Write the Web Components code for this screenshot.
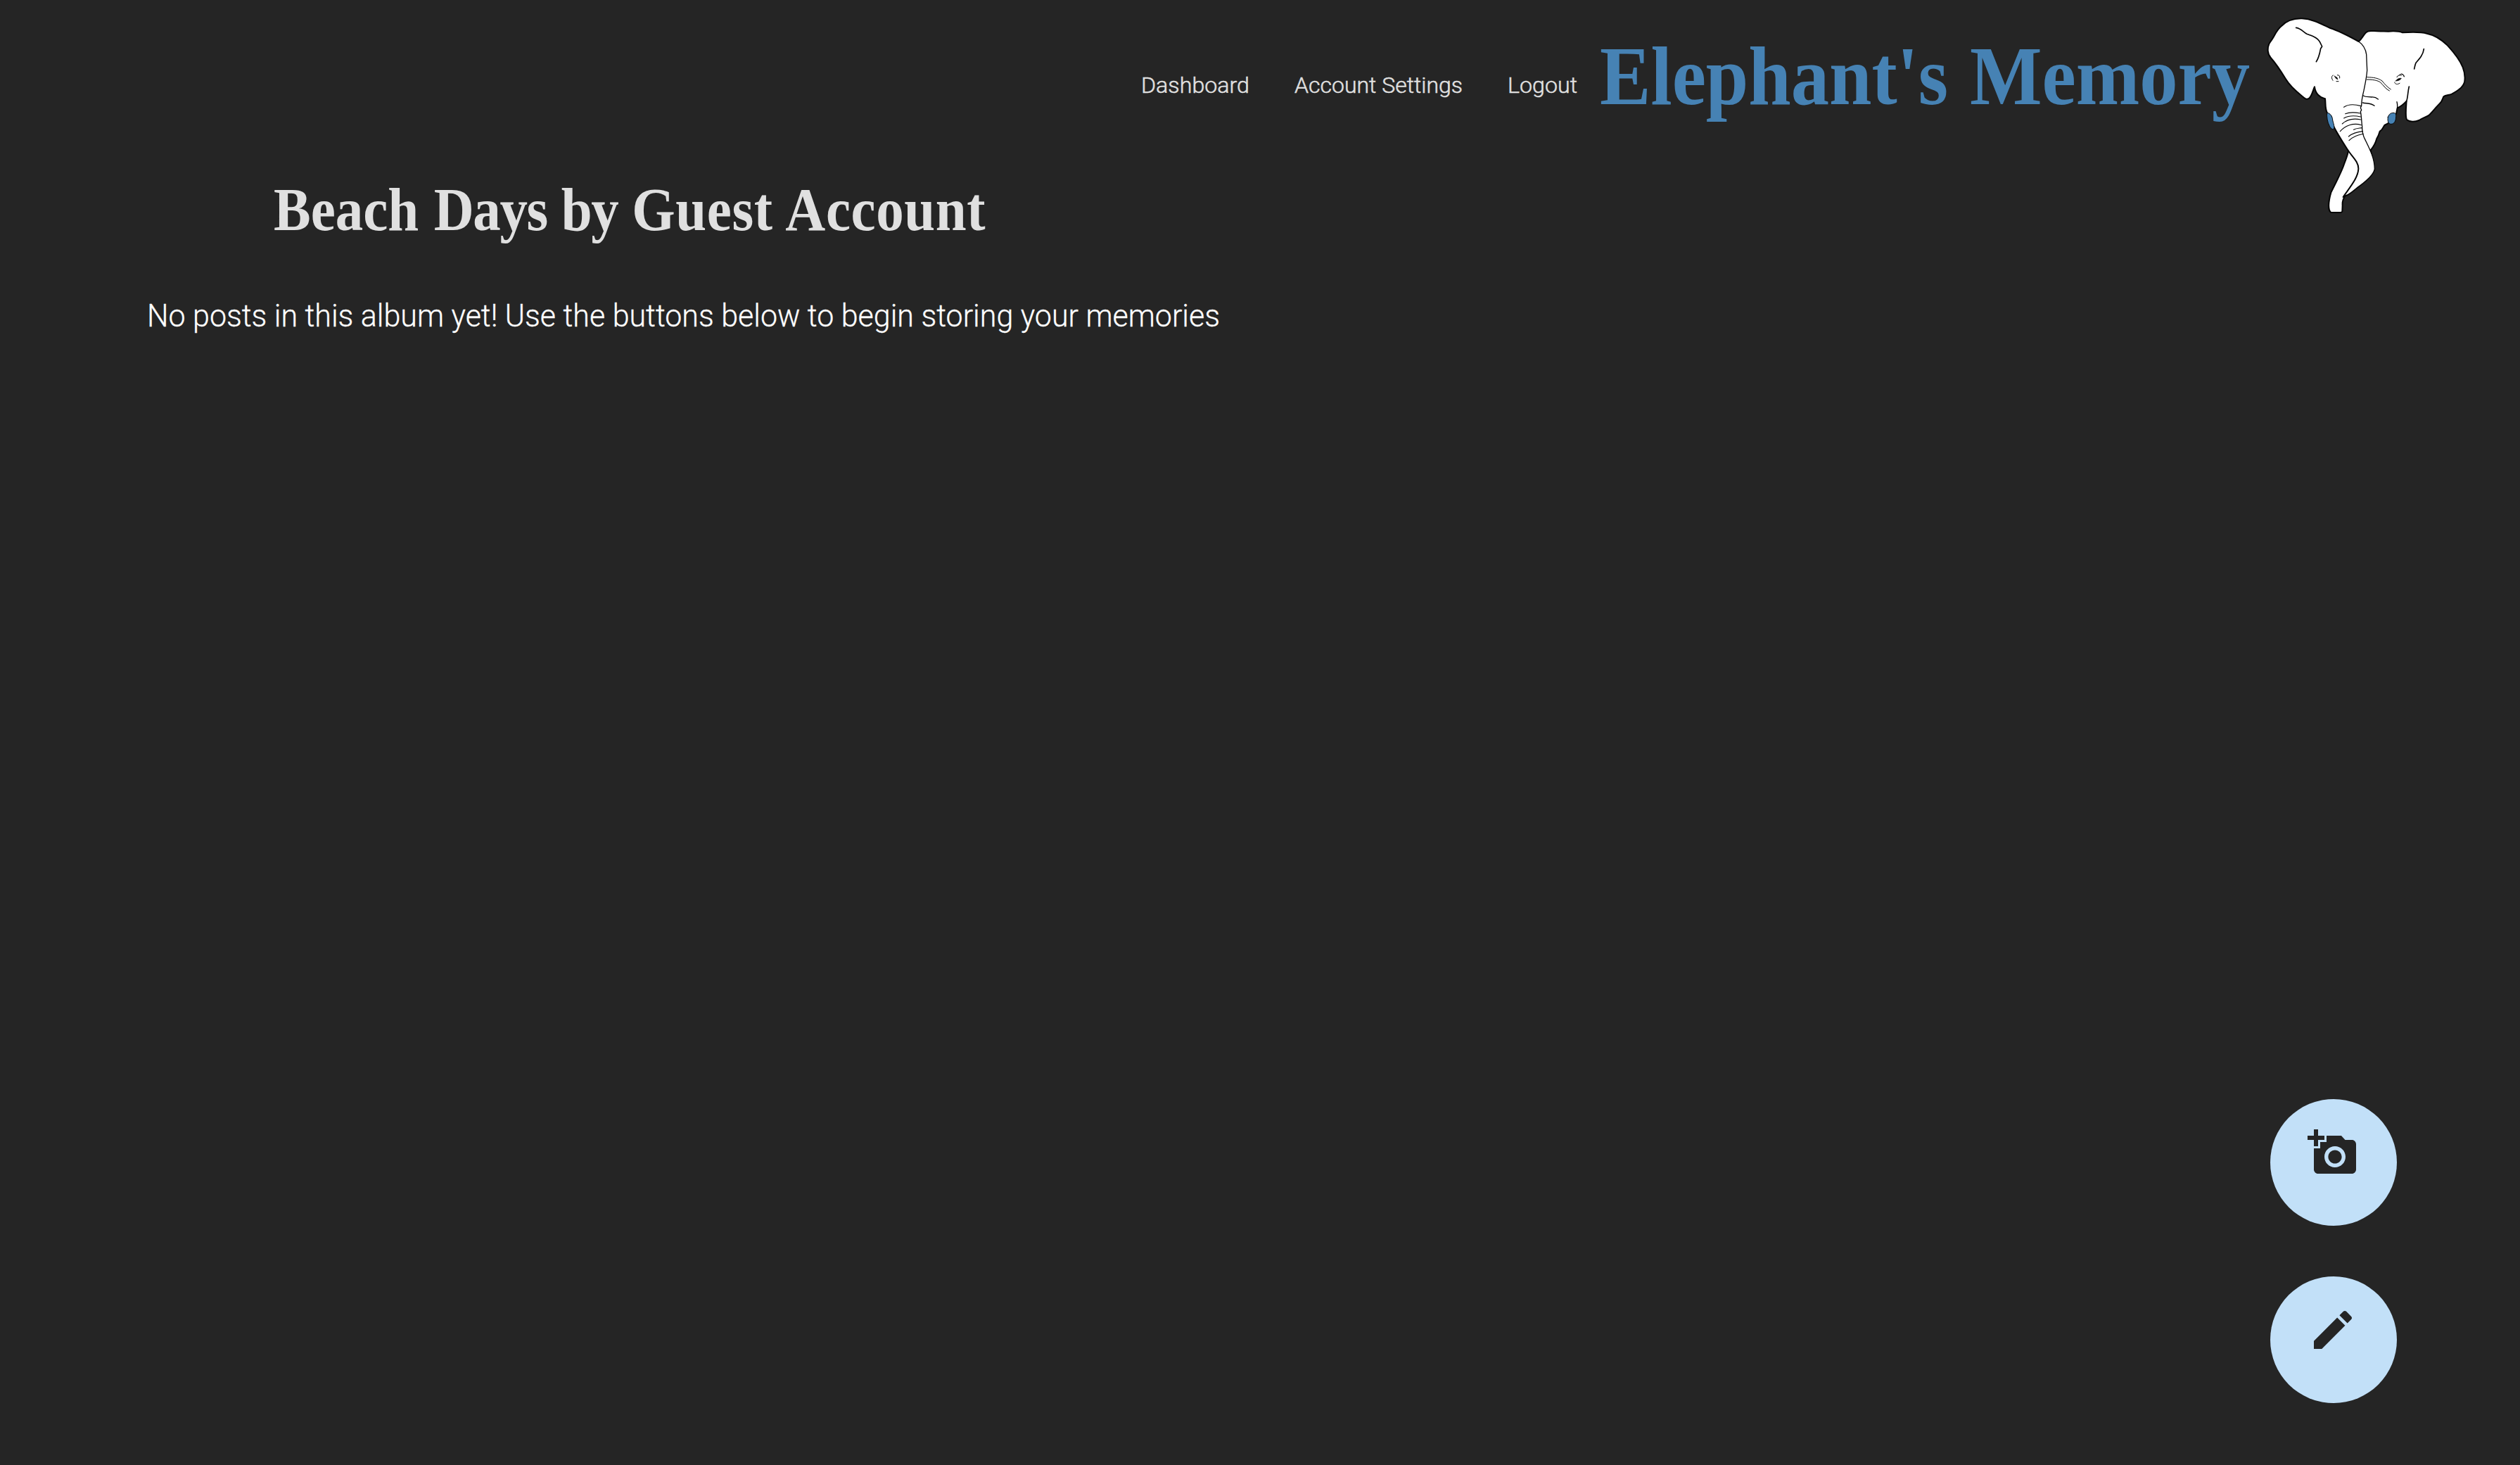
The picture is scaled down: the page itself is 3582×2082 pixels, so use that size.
<!DOCTYPE html>
<html lang="en">
<head>
<meta charset="utf-8">
<title>Elephant's Memory</title>
<style>
html,body{margin:0;height:100%;background:#252525}
body{font-family:Roboto,"Liberation Sans",sans-serif;overflow:hidden}
</style>
</head>
<body>
<album-page></album-page>
<script>
// One line of text condensed or expanded horizontally to a set measure.
class FitLine extends HTMLElement{
  connectedCallback(){
    const w=+this.getAttribute('measure');
    const root=this.attachShadow({mode:'open'});
    root.innerHTML=`<style>:host{display:block;width:${w}px;white-space:nowrap}span{display:inline-block;transform-origin:0 50%}</style><span><slot></slot></span>`;
    const s=root.querySelector('span');
    s.style.transform=`scaleX(${w/s.getBoundingClientRect().width})`;
  }
}
customElements.define('fit-line',FitLine);

class NavLink extends HTMLElement{
  constructor(){super();this.attachShadow({mode:'open'}).innerHTML=`<style>
  :host{display:block;padding:0 32px}
  a{color:#e0e0e0;font-weight:300;font-size:32px;line-height:38px;text-decoration:none;-webkit-text-stroke:.5px #e0e0e0}
  </style><a href="#"><fit-line measure="${this.getAttribute('measure')}"><slot></slot></fit-line></a>`;}
}
customElements.define('nav-link',NavLink);

class ElephantLogo extends HTMLElement{
  constructor(){super();this.attachShadow({mode:'open'}).innerHTML=`<style>:host{display:block;width:320px;height:300px}svg{display:block;width:100%;height:100%}</style>
<svg viewBox="0 0 960 900" stroke="#050505" stroke-linejoin="round" stroke-linecap="round">
<path fill="#fff" stroke-width="6" d="M458 147C472 136 478 119 490 108C499 99 510 103 524 102C545 105 565 102 585 104C610 102 630 103 645 109C680 107 720 105 749 113C785 120 812 139 837 164C868 198 889 224 902 257C910 278 913 300 909 320C902 344 878 358 855 371C842 376 829 375 820 382C815 392 814 402 804 411C788 426 775 446 757 462C740 471 728 475 715 483C697 491 675 489 664 481C656 470 659 442 662 401C652 412 640 424 623 430L618 455L583 496L568 504C561 513 561 523 548 530C545 541 543 548 535 561C530 580 522 595 509 610L526 690C520 718 488 744 453 769C435 783 419 799 401 805C388 820 388 832 389 846L388 872Q386 876 380 876H340C326 866 329 829 340 791C358 754 378 717 392 681C402 650 410 638 414 614L460 500Z"/>
<path fill="#fff" stroke="none" d="M128 82C151 57 180 48 216 49C265 51 303 75 337 90C380 104 420 126 459 148C476 160 488 180 491 202L494 270C492 300 486 326 480 356C474 380 470 402 470 420C465 435 470 465 472 500C475 550 483 568 495 588C513 627 526 653 526 691C521 715 491 742 453 769C430 788 417 800 403 803C419 770 455 730 457 690C458 659 429 638 412 610C393 580 368 542 352 510L344 465L323 449C314 432 318 413 315 391C292 386 273 368 270 340C264 351 260 376 247 389C235 397 228 390 217 380C193 361 165 337 147 307C127 274 106 242 83 216C69 201 68 176 76 157C82 145 90 138 95 128C104 112 112 95 128 82Z"/>
<g fill="none">
<path stroke-width="6" d="M458 147C420 126 380 104 337 90C303 75 265 51 216 49C180 48 151 57 128 82C112 95 104 112 95 128C90 138 82 145 76 157C68 176 69 201 83 216C106 242 127 274 147 307C165 337 193 361 217 380C228 390 235 397 247 389C260 376 264 351 270 340C273 368 292 386 315 391C318 413 314 432 323 449M352 510C368 542 393 580 412 610C429 638 458 659 457 690C455 730 419 770 392 810"/>
<path stroke-width="4" d="M458 147C477 160 488 180 491 202L494 270C492 300 486 326 480 356C474 380 470 402 470 421L466 430L470 439L466 446C470 464 470 489 473 510C472 526 477 550 484 562C505 605 526 644 526 691C521 715 491 742 453 769C430 788 417 800 403 803"/>
<path stroke-width="5" d="M191 88C212 91 220 105 237 115C258 122 282 130 292 148L302 168L296 177C292 198 288 218 277 233"/>
<path stroke-width="5" d="M736 179C733 204 717 221 702 238C698 247 697 256 695 264"/>
<path stroke-width="5" d="M673 339C667 362 668 387 662 401"/><path stroke-width="4" d="M621 404C624 413 623 422 623 433"/>
<path stroke-width="3" d="M494 299C520 300 540 302 558 315C570 330 581 342 595 351M493 309C518 309 537 312 551 321C565 336 574 350 589 357"/>
<path stroke-width="4" d="M478 378C489 386 502 381 514 384C526 383 534 387 541 393M475 408C492 412 511 408 525 421"/>
<path stroke-width="3.4" d="M395 427C416 412 443 415 468 422M401 455C420 447 444 449 466 453M395 474C418 461 444 463 466 468M388 498C408 479 437 474 467 480M379 530C400 506 435 492 469 503M437 523C448 516 460 517 472 515M415 552C434 536 454 532 475 530M417 569C436 550 456 546 477 541"/>
<path stroke-width="3" d="M349 291C342 292 341 304 348 313M367 290C374 289 379 294 377 303M363 317L372 317M621 299C625 290 634 289 640 292M632 289C638 284 646 284 652 297M641 285C648 286 652 291 652 296M611 321C614 329 622 332 633 325"/>
</g>
<path stroke-width="2" fill="#050505" d="M355 294L366 301L369 309L361 304ZM616 315C622 306 632 302 640 304C636 311 627 315 616 315Z"/>
<path fill="#4682b4" stroke-width="3" d="M323 451C337 451 346 467 347 481C349 494 357 510 352 519C348 524 340 519 334 508C325 492 321 467 323 451ZM583 469C587 457 595 451 606 451C614 451 618 455 617 467C617 487 609 499 596 499C585 499 580 487 583 469Z"/>
</svg>`;}
}
customElements.define('elephant-logo',ElephantLogo);

class SiteHeader extends HTMLElement{
  constructor(){super();this.attachShadow({mode:'open'}).innerHTML=`<style>
  :host{display:flex;justify-content:flex-end;align-items:flex-start;height:230px;padding:10px 62px 0 0;box-sizing:border-box}
  nav{display:flex;padding-top:92px}
  h1{margin:0;padding-top:32px;width:926px;font:700 118px/134px "Liberation Serif",serif;word-spacing:4px;color:#4682b4}
  </style><nav><slot></slot></nav><h1><fit-line measure="924">Elephant's Memory</fit-line></h1><elephant-logo></elephant-logo>`;}
}
customElements.define('site-header',SiteHeader);

class RoundAction extends HTMLElement{
  constructor(){super();this.attachShadow({mode:'open'}).innerHTML=`<style>
  :host{display:block}
  button{display:flex;align-items:flex-start;width:180px;height:180px;padding:40px 0 0 53px;margin:0;border:0;border-radius:50%;background:#c2e0f8;box-sizing:border-box}
  svg{display:block;width:72px;height:72px;fill:#252525;flex:none}
  </style><button aria-label="${this.getAttribute('label')}"><svg viewBox="0 0 24 24"><path d="${this.getAttribute('icon')}"/></svg></button>`;}
}
customElements.define('round-action',RoundAction);

class AlbumPage extends HTMLElement{
  constructor(){super();this.attachShadow({mode:'open'}).innerHTML=`<style>
  :host{display:flex;flex-direction:column;height:100vh;min-height:2082px;box-sizing:border-box;padding-bottom:88px}
  main{display:flex;flex-direction:column;flex:1}
  h2{margin:18px 0 0 389px;font:700 86px/100px "Liberation Serif",serif;word-spacing:2px;color:#e0e0e0}
  .tight{letter-spacing:-1.6px}
  .wide{letter-spacing:.6px}
  p{margin:75px 0 0 209px;font-weight:300;font-size:44px;line-height:52px;color:#fff;-webkit-text-stroke:.3px #fff}
  .actions{display:flex;flex-direction:column;gap:72px;align-self:flex-end;margin:auto 175px 0 0}
  </style>
  <site-header><nav-link measure="154">Dashboard</nav-link><nav-link measure="239">Account Settings</nav-link><nav-link measure="99">Logout</nav-link></site-header>
  <main>
    <h2><fit-line measure="1012">Beach <span class="tight">Days by </span><span class="wide">Guest Account</span></fit-line></h2>
    <p><fit-line measure="1525">No posts in this album yet! Use the buttons below to begin storing your memories</fit-line></p>
    <div class="actions">
      <round-action label="Add photo" icon="M3 4V1h2v3h3v2H5v3H3V6H0V4h3zm3 6V7h3V4h7l1.83 2H21c1.1 0 2 .9 2 2v12c0 1.1-.9 2-2 2H5c-1.1 0-2-.9-2-2V10h3zm7 9c2.76 0 5-2.24 5-5s-2.24-5-5-5-5 2.24-5 5 2.24 5 5 5zm-3.2-5c0 1.77 1.43 3.2 3.2 3.2s3.2-1.43 3.2-3.2-1.43-3.2-3.2-3.2-3.2 1.43-3.2 3.2z"></round-action>
      <round-action label="Write post" icon="M3 17.25V21h3.75L17.81 9.94l-3.75-3.75L3 17.25zM20.71 7.04c.39-.39.39-1.02 0-1.41l-2.34-2.34c-.39-.39-1.02-.39-1.41 0l-1.83 1.83 3.75 3.75 1.83-1.83z"></round-action>
    </div>
  </main>`;}
}
customElements.define('album-page',AlbumPage);
</script>
</body>
</html>
